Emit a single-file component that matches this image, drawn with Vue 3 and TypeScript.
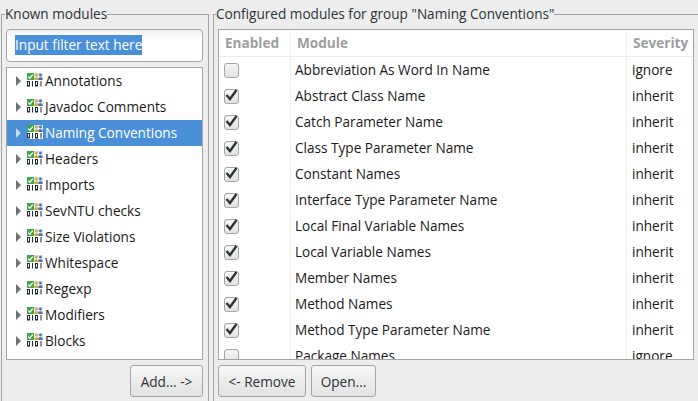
<script setup lang="ts">
const groups: string[] = ['Annotations','Javadoc Comments','Naming Conventions','Headers','Imports','SevNTU checks','Size Violations','Whitespace','Regexp','Modifiers','Blocks']
const modules: [string,string,boolean][] = [
['Abbreviation As Word In Name','ignore',false],
['Abstract Class Name','inherit',true],
['Catch Parameter Name','inherit',true],
['Class Type Parameter Name','inherit',true],
['Constant Names','inherit',true],
['Interface Type Parameter Name','inherit',true],
['Local Final Variable Names','inherit',true],
['Local Variable Names','inherit',true],
['Member Names','inherit',true],
['Method Names','inherit',true],
['Method Type Parameter Name','inherit',true],
['Package Names','ignore',false],
]
</script>

<template>
  <div class="root">
    <fieldset class="group left">
      <legend>Known modules</legend>
      <div class="filter"><span class="sel">Input filter text here</span></div>
      <div class="tree">
        <div v-for="g in groups" :key="g" class="node" :class="{ active: g === 'Naming Conventions' }">
          <span class="arrow"></span>
          <svg class="icon" width="16" height="14" viewBox="0 0 16 14">
            <rect x="0" y="0" width="7" height="7" fill="#3fa648"/>
            <path d="M1.2 3.6l1.6 1.6L5.8 1.6" fill="none" stroke="#fff" stroke-width="1.3"/>
            <rect x="7" y="0" width="9" height="7" fill="#dfe8f4"/>
            <circle cx="9.4" cy="2" r="1.4" fill="#d9a92a"/>
            <path d="M7.4 7v-2q2-1.4 4 0v2z" fill="#d9a92a"/>
            <circle cx="13.4" cy="2" r="1.4" fill="#4a6ea8"/>
            <path d="M11.5 7v-2q2-1.4 4 0v2z" fill="#4a6ea8"/>
            <rect x="0" y="7" width="16" height="7" fill="#fff"/>
            <g fill="none" stroke="#1c2b3a" stroke-width="1">
              <rect x="0.5" y="8.5" width="2" height="4.5"/>
              <path d="M5.5 8v5.5"/>
              <rect x="8.5" y="8.5" width="2" height="4.5"/>
              <path d="M14 8v5.5"/>
            </g>
          </svg>
          <span class="label">{{ g }}</span>
        </div>
      </div>
      <div class="actions end"><button class="btn add">Add... -&gt;</button></div>
    </fieldset>
    <fieldset class="group right">
      <legend>Configured modules for group "Naming Conventions"</legend>
      <div class="table">
        <div class="row head">
          <div class="c1">Enabled</div><div class="c2">Module</div><div class="c3">Severity</div>
        </div>
        <div v-for="m in modules" :key="m[0]" class="row">
          <div class="c1 box"><span class="check"><svg v-if="m[2]" width="15" height="15" viewBox="0 0 15 15"><path d="M2.5 7l3.5 4L12.5 2" fill="none" stroke="#2e3436" stroke-width="2.4"/></svg></span></div>
          <div class="c2">{{ m[0] }}</div>
          <div class="c3">{{ m[1] }}</div>
        </div>
      </div>
      <div class="actions">
        <button class="btn remove">&lt;- Remove</button>
        <button class="btn open">Open...</button>
      </div>
    </fieldset>
  </div>
</template>

<style>
html, body { margin: 0; background: #ededed; }
</style>

<style scoped>
.root { width: 698px; height: 401px; overflow: hidden; display: flex; background: #ededed; font-family: "Open Sans", sans-serif; font-size: 13.6px; color: #2e3436; }
.group { margin: 0; min-width: 0; flex: none; box-sizing: border-box; border: 1px solid #a3a3a3; border-bottom: 0; height: 420px; }
.group legend { padding: 0; height: 29px; line-height: 28px; font-size: 13.6px; }
.left { width: 208px; margin-left: 1px; padding: 0 4px; }
.left legend { margin-left: -1px; }
.right { width: 500px; margin-left: 4px; padding: 0 0 0 4px; }
.right legend { margin-left: -2px; }
.filter { height: 33px; width: 197px; box-sizing: border-box; border: 1px solid #a5a5a5; border-radius: 4px; background: linear-gradient(#f1f1f1, #fff 30%); padding: 5px 0 0 8px; }
.sel { display: inline-block; height: 20px; line-height: 20px; background: #4a90d9; color: #fff; vertical-align: top; }
.tree { margin-top: 5px; width: 197px; height: 293px; box-sizing: border-box; border: 1px solid #a5a5a5; background: #fff; color: #1a1a1a; }
.node { height: 26px; display: flex; align-items: center; padding-left: 9px; }
.node.active { background: #4a90d9; color: #fff; }
.label { padding-bottom: 2px; }
.arrow { width: 0; height: 0; border-left: 5px solid #6f7272; border-top: 5px solid transparent; border-bottom: 5px solid transparent; margin-right: 6px; }
.active .arrow { border-left-color: #c5d9f0; }
.icon { margin: -2px 2px 0 0; flex: none; }
.actions { margin-top: 5px; display: flex; gap: 5px; }
.actions.end { justify-content: flex-end; width: 197px; }
.btn { height: 32px; box-sizing: border-box; border: 1px solid #a5a5a5; border-radius: 3px; background: linear-gradient(#f6f6f6, #e2e2e2); font: inherit; color: #2e3436; padding: 0; }
.add { width: 73px; }
.remove { width: 88px; }
.open { width: 65px; }
.table { width: 476px; height: 331px; box-sizing: border-box; border: 1px solid #a5a5a5; background: #fff; overflow: hidden; color: #1a1a1a; }
.row { display: flex; height: 26px; align-items: center; }
.head { color: #9c9e9f; font-weight: 700; border-bottom: 1px solid #ededed; }
.c1, .c2, .c3 { box-sizing: border-box; height: 100%; display: flex; align-items: center; padding-bottom: 2px; }
.c1 { width: 72px; padding-left: 5px; border-right: 1px solid #ededed; }
.c1.box { padding-bottom: 0; }
.c2 { width: 336px; padding-left: 4px; border-right: 1px solid #ededed; }
.c3 { flex: 1; padding-left: 5px; }
.head .c1, .head .c2, .head .c3 { padding-left: 6px; }
.check { width: 15px; height: 15px; box-sizing: border-box; border: 1px solid #a5a5a5; border-radius: 3px; background: linear-gradient(#f6f6f6, #e2e2e2); display: flex; }
.check svg { margin: -2px 0 0 -1px; flex: none; }
</style>
